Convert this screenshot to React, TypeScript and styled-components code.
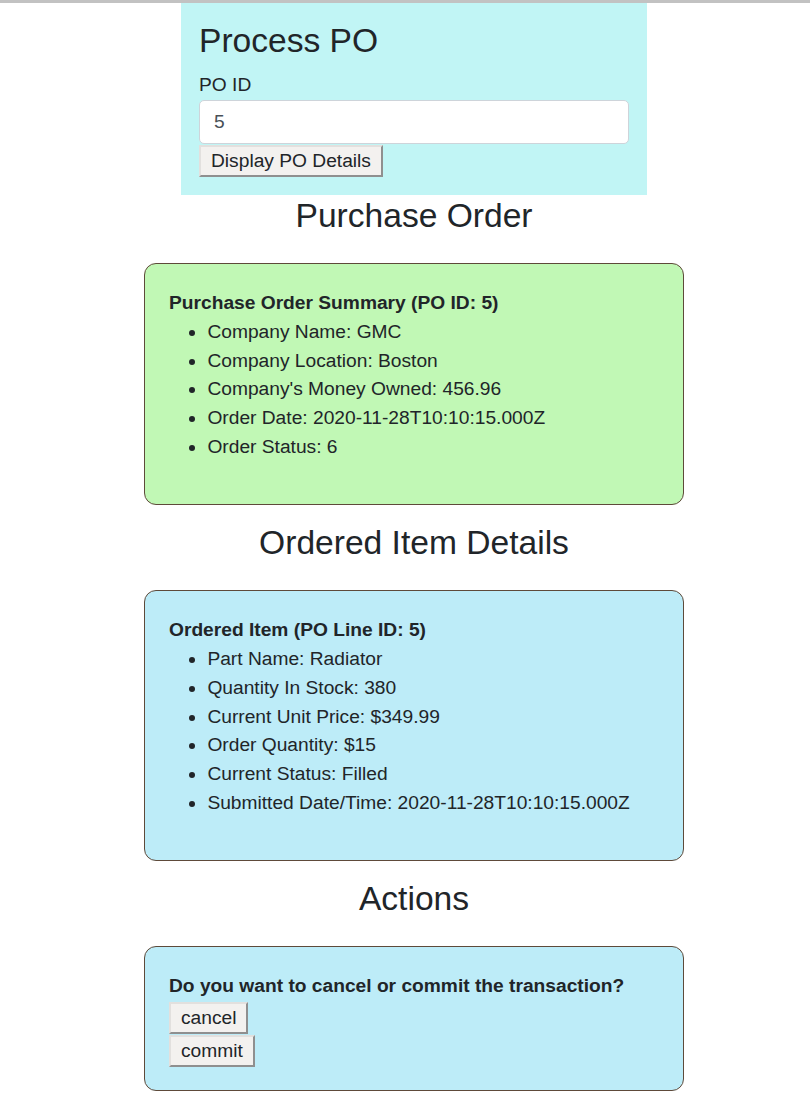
import React, { useState } from "react";
import styled, { createGlobalStyle } from "styled-components";

const GlobalStyle = createGlobalStyle`
  html, body {
    margin: 0;
    padding: 0;
    background: #ffffff;
  }
  body {
    border-top: 3px solid #c2c2c2;
    font-family: "Liberation Sans", Arial, sans-serif;
    font-size: 19.2px;
    line-height: 1.5;
    color: #212529;
  }
  * {
    box-sizing: border-box;
  }
`;

const Page = styled.div`
  display: flex;
  flex-direction: column;
  align-items: center;
  padding-left: 18px;
`;

const FormPanel = styled.div`
  width: 466px;
  background: #c1f5f5;
  padding: 18px;
  margin-bottom: 1px;
  display: flex;
  flex-direction: column;
  align-items: flex-start;
`;

const Heading = styled.h3<{ $center?: boolean }>`
  margin: 0 0 ${(p) => (p.$center ? "27px" : "9.6px")};
  font-size: 33.6px;
  font-weight: 400;
  line-height: 1.2;
  text-align: ${(p) => (p.$center ? "center" : "left")};
  width: 100%;
`;

const Label = styled.label`
  display: block;
  margin: 0;
`;

const TextInput = styled.input`
  display: block;
  width: 430px;
  height: 44px;
  padding: 0 14px;
  font-family: inherit;
  font-size: 19.2px;
  color: #495057;
  background: #ffffff;
  border: 1px solid #ced4da;
  border-radius: 5px;
  outline: none;
`;

const Button = styled.button`
  display: block;
  margin: 1px 0 0;
  padding: 1px 10px;
  font-family: inherit;
  font-size: 19.2px;
  line-height: 26px;
  color: #212529;
  background: #f3f1ef;
  border: 2px solid;
  border-color: #e2e0de #8f8f8f #8f8f8f #e2e0de;
  border-radius: 0;
  cursor: pointer;
`;

const Card = styled.section<{ $bg: string }>`
  width: 540px;
  background: ${(p) => p.$bg};
  border: 1px solid #5e4a3a;
  border-radius: 12px;
  padding: 25px 24px 23px;
  margin-bottom: 18px;
`;

const CardTitle = styled.div`
  font-weight: 700;
`;

const List = styled.ul`
  margin: 0 0 19.2px;
  padding-left: 38.4px;
`;

const Item = styled.li``;

export default function App() {
  const [poId, setPoId] = useState("5");

  return (
    <>
      <GlobalStyle />
      <Page>
        <FormPanel>
          <Heading>Process PO</Heading>
          <Label htmlFor="po-id">PO ID</Label>
          <TextInput
            id="po-id"
            value={poId}
            onChange={(e) => setPoId(e.target.value)}
          />
          <Button>Display PO Details</Button>
        </FormPanel>

        <Heading $center>Purchase Order</Heading>
        <Card $bg="#c1f8b5">
          <CardTitle>Purchase Order Summary (PO ID: 5)</CardTitle>
          <List>
            <Item>Company Name: GMC</Item>
            <Item>Company Location: Boston</Item>
            <Item>Company's Money Owned: 456.96</Item>
            <Item>Order Date: 2020-11-28T10:10:15.000Z</Item>
            <Item>Order Status: 6</Item>
          </List>
        </Card>

        <Heading $center>Ordered Item Details</Heading>
        <Card $bg="#bdecf8">
          <CardTitle>Ordered Item (PO Line ID: 5)</CardTitle>
          <List>
            <Item>Part Name: Radiator</Item>
            <Item>Quantity In Stock: 380</Item>
            <Item>Current Unit Price: $349.99</Item>
            <Item>Order Quantity: $15</Item>
            <Item>Current Status: Filled</Item>
            <Item>Submitted Date/Time: 2020-11-28T10:10:15.000Z</Item>
          </List>
        </Card>

        <Heading $center>Actions</Heading>
        <Card $bg="#bdecf8">
          <CardTitle>Do you want to cancel or commit the transaction?</CardTitle>
          <Button>cancel</Button>
          <Button>commit</Button>
        </Card>
      </Page>
    </>
  );
}
